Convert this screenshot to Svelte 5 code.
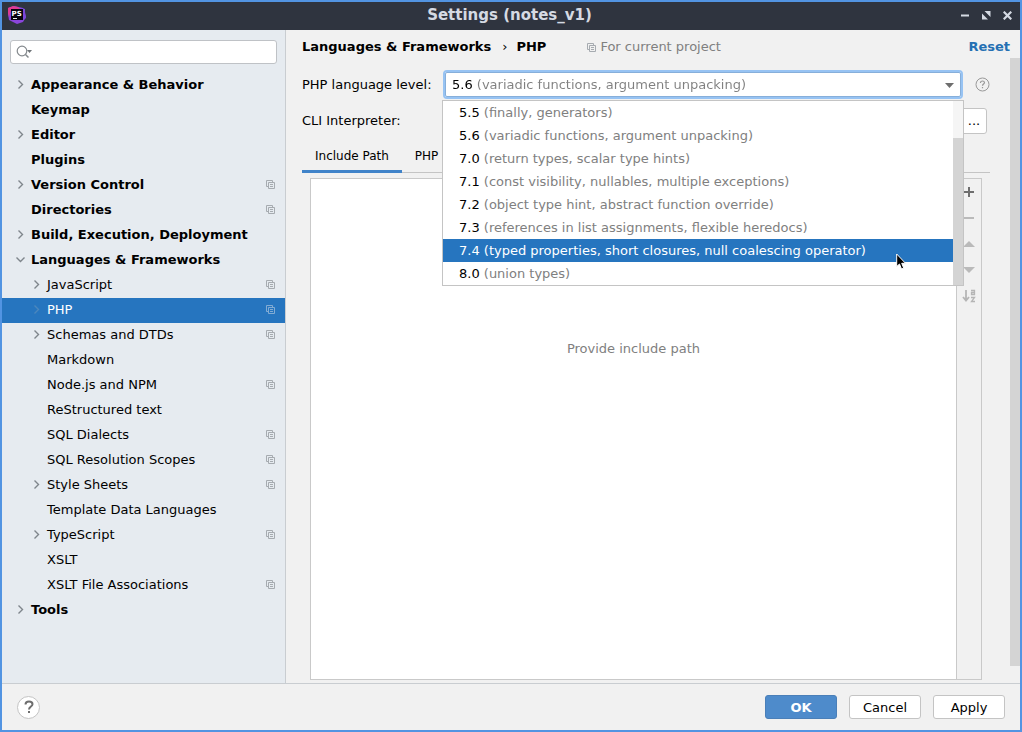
<script>
  const tree = [
    { label: 'Appearance & Behavior', bold: true, arrow: 'right' },
    { label: 'Keymap', bold: true },
    { label: 'Editor', bold: true, arrow: 'right' },
    { label: 'Plugins', bold: true },
    { label: 'Version Control', bold: true, arrow: 'right', project: true },
    { label: 'Directories', bold: true, project: true },
    { label: 'Build, Execution, Deployment', bold: true, arrow: 'right' },
    { label: 'Languages & Frameworks', bold: true, arrow: 'down' },
    { label: 'JavaScript', child: true, arrow: 'right', project: true },
    { label: 'PHP', child: true, arrow: 'right', project: true },
    { label: 'Schemas and DTDs', child: true, arrow: 'right', project: true },
    { label: 'Markdown', child: true },
    { label: 'Node.js and NPM', child: true, project: true },
    { label: 'ReStructured text', child: true },
    { label: 'SQL Dialects', child: true, project: true },
    { label: 'SQL Resolution Scopes', child: true, project: true },
    { label: 'Style Sheets', child: true, arrow: 'right', project: true },
    { label: 'Template Data Languages', child: true },
    { label: 'TypeScript', child: true, arrow: 'right', project: true },
    { label: 'XSLT', child: true },
    { label: 'XSLT File Associations', child: true, project: true },
    { label: 'Tools', bold: true, arrow: 'right' }
  ];

  const levels = [
    { version: '5.5', note: '(finally, generators)' },
    { version: '5.6', note: '(variadic functions, argument unpacking)' },
    { version: '7.0', note: '(return types, scalar type hints)' },
    { version: '7.1', note: '(const visibility, nullables, multiple exceptions)' },
    { version: '7.2', note: '(object type hint, abstract function override)' },
    { version: '7.3', note: '(references in list assignments, flexible heredocs)' },
    { version: '7.4', note: '(typed properties, short closures, null coalescing operator)' },
    { version: '8.0', note: '(union types)' }
  ];

  let selected = $state('PHP');
  let level = $state('5.6');
  let hovered = $state('7.4');
  let open = $state(true);

  function toggle(event) {
    event.preventDefault();
    open = !open;
  }

  function choose(version) {
    level = version;
    open = false;
  }
</script>

{#snippet projectIcon()}
  <svg class="project" width="9" height="9" viewBox="0 0 9 9" fill="none" stroke="currentColor" aria-hidden="true">
    <path d="M2 6.5H.5v-6h6V2M2.5 2.5h6v6h-6zM4 4.5h3M4 6.5h3" />
  </svg>
{/snippet}

<div class="window">
  <header class="titlebar">
    <svg class="logo" width="20" height="20" viewBox="0 0 20 20" aria-hidden="true">
      <path d="M1 3 7 1l9 2 2 4 1 5-3 5-6 2-4-2-4-2-1-6z" fill="#8b45dc" />
      <path d="M1 3 6 1l5 1 3 3-10 1-2 6-1-4z" fill="#e03a91" />
      <path d="m14 3 4 1v5l1 4-4 3z" fill="#7a46d9" />
      <path d="M4 4h12v11H4z" fill="#080510" />
      <path d="M6 13.5h4" stroke="#eee" />
      <text x="4.500" y="10.500" font-size="7" font-weight="bold" fill="#fff">PS</text>
    </svg>
    <h1>Settings (notes_v1)</h1>
    <div class="window-buttons">
      <button aria-label="Minimize"><svg width="9" height="9" viewBox="0 0 9 9"><path d="M0 4.5h8" stroke="currentColor" stroke-width="2" /></svg></button>
      <button aria-label="Maximize"><svg width="9" height="9" viewBox="0 0 9 9"><path d="M2.500 0H8.500V6zM0 2.500V8.500H6z" fill="currentColor" /></svg></button>
      <button aria-label="Close"><svg width="9" height="9" viewBox="0 0 9 9"><path d="m.7.7 7.600 7.600M8.300.7.7 8.300" stroke="currentColor" stroke-width="2.200" /></svg></button>
    </div>
  </header>

  <div class="body">
    <aside>
      <label class="search">
        <svg width="17" height="14" viewBox="0 0 17 14" fill="none" stroke="#84898d" aria-hidden="true">
          <circle cx="6" cy="6" r="4.800" stroke-width="1.200" />
          <path d="m9.500 9.500 3 3" stroke-width="1.500" />
          <path d="M11 5h5l-2.500 3z" fill="#6e7377" stroke="none" />
        </svg>
        <input type="text" aria-label="Search" />
      </label>
      <nav>
        {#each tree as item}
          <button
            class="node"
            class:bold={item.bold}
            class:child={item.child}
            class:active={item.label === selected}
            onclick={() => (selected = item.label)}
          >
            <span class="arrow">
              {#if item.arrow === 'right'}
                <svg width="10" height="9" viewBox="0 0 10 9" fill="none" stroke="currentColor" stroke-width="1.400"><path d="m3.500.5 4 4-4 4" /></svg>
              {:else if item.arrow === 'down'}
                <svg width="10" height="9" viewBox="0 0 10 9" fill="none" stroke="currentColor" stroke-width="1.400"><path d="m1.500 2.500 4 4 4-4" /></svg>
              {/if}
            </span>
            <span class="label">{item.label}</span>
            {#if item.project}{@render projectIcon()}{/if}
          </button>
        {/each}
      </nav>
    </aside>

    <main>
      <div class="crumbs">
        <h2>Languages &amp; Frameworks</h2>
        <span class="sep">›</span>
        <h2>PHP</h2>
        <span class="scope">{@render projectIcon()}For current project</span>
        <a class="reset" href="#reset">Reset</a>
      </div>

      <div class="scroll">
        <div class="content">
          <div class="row">
            <label for="level">PHP language level:</label>
            <div class="combo">
              <select id="level" bind:value={level} onmousedown={toggle}>
                {#each levels as item}
                  <option value={item.version}>{item.version} {item.note}</option>
                {/each}
              </select>
              <svg class="caret" width="10" height="6" viewBox="0 0 10 6" aria-hidden="true"><path d="M0 0h9L4.500 5z" fill="#6e6e6e" /></svg>
              {#if open}
                <div class="popup">
                  <ul role="listbox" aria-label="PHP language level">
                    {#each levels as item}
                      <li role="option" aria-selected={item.version === level}>
                        <button
                          class:hot={item.version === hovered}
                          onmouseenter={() => (hovered = item.version)}
                          onclick={() => choose(item.version)}
                        >{item.version} <span>{item.note}</span></button>
                      </li>
                    {/each}
                  </ul>
                  <div class="track"><div class="thumb"></div></div>
                  <svg class="pointer" width="12" height="18" viewBox="0 0 12 18" aria-hidden="true">
                    <path d="M.7 1v12.500l2.800-2.500 2 5 2.200-.9-2-4.800h3.800z" fill="#000" stroke="#fff" />
                  </svg>
                </div>
              {/if}
            </div>
            <button class="hint" aria-label="About language levels">
              <svg width="15" height="15" viewBox="0 0 15 15" fill="none" stroke="#999">
                <circle cx="7.500" cy="7.500" r="6.500" />
                <path d="M5.500 6V5.500q.2-1.500 2-1.500t2 1.500c0 1.500-2 1.500-2 3.200M7.500 10v1.300" stroke-width="1.200" />
              </svg>
            </button>
          </div>

          <div class="row">
            <span>CLI Interpreter:</span>
            <button class="plain more">...</button>
          </div>

          <div class="tabs" role="tablist">
            <button role="tab" class="current" aria-selected="true">Include Path</button>
            <button role="tab" aria-selected="false">PHP</button>
          </div>

          <section class="panel">
            <p>Provide include path</p>
            <div class="tools">
              <button aria-label="Add"><svg width="16" height="16" viewBox="0 0 16 16"><path d="M3 8h10M8 3v10" stroke="#6e6e6e" stroke-width="2" /></svg></button>
              <button aria-label="Remove"><svg width="16" height="16" viewBox="0 0 16 16"><path d="M3 8h10" stroke="#bababa" stroke-width="2" /></svg></button>
              <button aria-label="Move up"><svg width="16" height="16" viewBox="0 0 16 16"><path d="M2 11h12L8 5z" fill="#bababa" /></svg></button>
              <button aria-label="Move down"><svg width="16" height="16" viewBox="0 0 16 16"><path d="M2 5h12l-6 6z" fill="#bababa" /></svg></button>
              <button aria-label="Sort">
                <svg width="16" height="16" viewBox="0 0 16 16" fill="none" stroke="#b5b5b5">
                  <path d="M5 2v10M2 9l3 3.500L8 9" stroke-width="1.800" />
                  <path d="M10 2.500h3.500v4H10.500v-2h3M10 9.500h3.500l-3 4H14" stroke-width="1.300" />
                </svg>
              </button>
            </div>
          </section>
        </div>
        <div class="page-thumb"></div>
      </div>
    </main>
  </div>

  <footer>
    <button class="help" aria-label="Help">
      <svg width="12" height="14" viewBox="0 0 12 14" fill="none" stroke="#6e6e6e" stroke-width="2">
        <path d="M2.500 4.500C2.500 2.500 4 1.500 6 1.500s3.500 1 3.500 2.700C9.500 6.500 6 6.500 6 9.500M6 11v2" />
      </svg>
    </button>
    <button class="primary">OK</button>
    <button class="plain">Cancel</button>
    <button class="plain">Apply</button>
  </footer>
</div>

<style>
  :global(body) {
    margin: 0;
  }

  .window,
  .window :is(button, input, select) {
    font-family: 'DejaVu Sans', Verdana, sans-serif;
    font-size: 13px;
    line-height: 16px;
    color: #000;
    box-sizing: border-box;
  }

  button {
    border: 0;
    padding: 0;
    background: none;
  }

  svg {
    display: block;
    flex: none;
  }

  h1,
  h2,
  p,
  ul {
    margin: 0;
    padding: 0;
    font-size: inherit;
  }

  .window {
    display: flex;
    flex-direction: column;
    min-height: 100vh;
    border: 2px solid #5294e2;
    background: #f1f1f1;
  }

  .titlebar {
    display: grid;
    grid-template-columns: 1fr auto 1fr;
    align-items: center;
    height: 28px;
    box-sizing: border-box;
    padding: 0 8px 2px 5px;
    background: #2f343f;
  }

  .titlebar h1 {
    color: #d5dae3;
    font-size: 15px;
  }

  .window-buttons {
    display: flex;
    justify-content: flex-end;
    gap: 12px;
  }

  .window .window-buttons button {
    color: #d5dae3;
  }

  .body {
    display: flex;
    flex: 1;
  }

  aside {
    width: 284px;
    box-sizing: border-box;
    flex: none;
    border-right: 1px solid #c9cdd1;
    background: #e6ebf0;
  }

  .search {
    display: flex;
    align-items: center;
    height: 24px;
    box-sizing: border-box;
    margin: 10px 8px 9px;
    padding: 0 5px;
    border: 1px solid #bfc2c6;
    border-radius: 3px;
    background: #fff;
  }

  .search input {
    flex: 1;
    min-width: 0;
    border: 0;
    outline: 0;
    background: none;
  }

  .node {
    display: flex;
    align-items: center;
    width: 100%;
    height: 25px;
    padding: 0 10px 2px 13px;
    text-align: left;
  }

  .window .node.bold {
    font-weight: bold;
  }

  .node.child {
    padding-left: 29px;
  }

  .arrow {
    width: 16px;
    color: #7f868c;
  }

  .label {
    flex: 1;
    white-space: nowrap;
  }

  .project {
    color: #a6abb0;
  }

  .window .node.active {
    background: #2675bf;
    color: #fff;
  }

  .active .arrow {
    color: #4b87bd;
  }

  .active .project {
    color: #82acd4;
  }

  main {
    display: flex;
    flex-direction: column;
    flex: 1;
    min-width: 0;
  }

  .crumbs {
    display: flex;
    align-items: center;
    height: 28px;
    padding: 6px 10px 0 16px;
    box-sizing: border-box;
    white-space: nowrap;
  }

  .sep {
    padding: 0 9px 0 11px;
  }

  .scope {
    display: flex;
    align-items: center;
    gap: 4px;
    margin-left: 41px;
    color: #808080;
  }

  .reset {
    margin-left: auto;
    color: #2470b3;
    font-weight: bold;
    text-decoration: none;
  }

  .scroll {
    display: flex;
    flex: 1;
  }

  .content {
    display: flex;
    flex-direction: column;
    flex: 1;
    padding: 12px 20px 3px 16px;
  }

  .page-thumb {
    width: 10px;
    margin-bottom: 17px;
    background: #d4d4d4;
  }

  .row {
    display: grid;
    grid-template-columns: 141px 1fr 27px;
    align-items: center;
    height: 29px;
    margin-bottom: 7px;
  }

  .combo {
    position: relative;
    display: flex;
    box-sizing: border-box;
    height: 29px;
    border: 2px solid #97c3f3;
    border-radius: 4px;
    background: #fff;
  }

  .window select {
    appearance: none;
    width: 100%;
    padding: 0 28px 0 7px;
    border: 0;
    outline: 0;
    background: linear-gradient(to right, #000 29px, #808080 29px);
    background-clip: text;
    color: transparent;
  }

  .combo::before {
    content: '';
    position: absolute;
    inset: 0;
    border: 1px solid #87afda;
    border-radius: 2px;
    pointer-events: none;
  }

  .window option {
    color: #000;
  }

  .caret {
    position: absolute;
    right: 6px;
    top: 11px;
    pointer-events: none;
  }

  .popup {
    position: absolute;
    z-index: 2;
    top: 28px;
    left: -3px;
    right: -3px;
    display: flex;
    border: 1px solid #c4c4c4;
    background: #fff;
  }

  .popup ul {
    flex: 1;
    min-width: 0;
    list-style: none;
  }

  .popup button {
    display: block;
    width: 100%;
    height: 23px;
    padding: 0 16px;
    text-align: left;
    white-space: nowrap;
  }

  .popup button span {
    color: #808080;
  }

  .window .popup button.hot,
  .popup button.hot span {
    color: #fff;
  }

  .popup button.hot {
    background: #2675bf;
  }

  .track {
    width: 10px;
    padding-top: 37px;
    background: #f5f5f5;
    display: flex;
  }

  .thumb {
    flex: 1;
    background: #d4d4d4;
  }

  .pointer {
    position: absolute;
    right: 55px;
    top: 152px;
  }

  .hint {
    justify-self: end;
  }

  .plain,
  .primary,
  .help {
    border: 1px solid #c4c4c4;
    border-radius: 3px;
    background: #fff;
  }

  .more {
    grid-column: 3;
    width: 26px;
    height: 26px;
    margin-left: -2px;
  }

  .tabs {
    display: flex;
    height: 31px;
    box-sizing: border-box;
    box-shadow: inset 0 -1px #c4c4c4;
  }

  .window .tabs button {
    padding: 0 13px;
    border-bottom: 3px solid transparent;
    font-size: 12px;
  }

  .window .tabs .current {
    border-bottom-color: #4083c9;
  }

  .panel {
    display: flex;
    flex: 1;
    margin: 5px 8px 0;
    border: 1px solid #c9c9c9;
  }

  .panel p {
    flex: 1;
    padding-top: 162px;
    background: #fff;
    color: #808080;
    text-align: center;
  }

  .tools {
    display: flex;
    flex-direction: column;
    align-items: center;
    gap: 10px;
    width: 24px;
    padding-top: 5px;
    border-left: 1px solid #c9c9c9;
  }

  footer {
    display: flex;
    align-items: center;
    gap: 12px;
    height: 47px;
    box-sizing: border-box;
    padding: 0 15px;
    border-top: 1px solid #c9cdd1;
  }

  footer .plain,
  footer .primary {
    width: 72px;
    height: 24px;
    padding-top: 1px;
  }

  .window .primary {
    border-color: #4a7fb8;
    background: #4e8bcb;
    color: #fff;
    font-weight: bold;
  }

  .help {
    display: grid;
    place-items: center;
    width: 23px;
    height: 23px;
    margin-right: auto;
    border-radius: 50%;
  }
</style>
